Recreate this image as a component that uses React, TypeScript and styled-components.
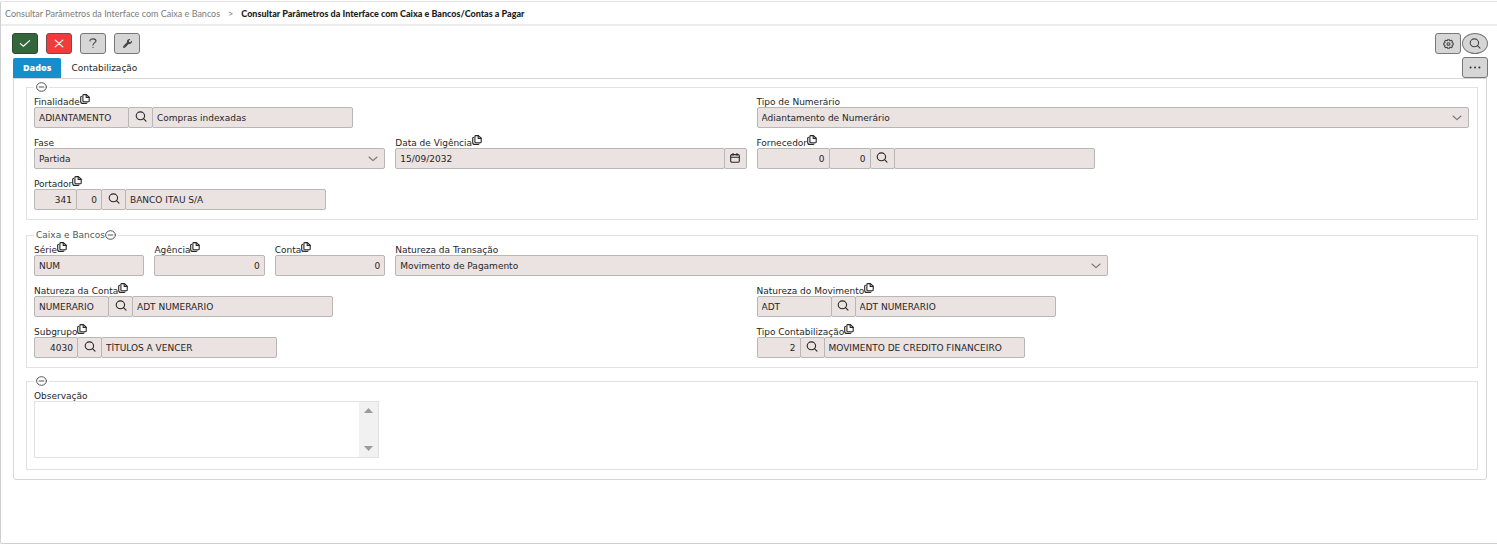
import React from "react";
import styled, { createGlobalStyle, css } from "styled-components";
import { FaWrench } from "react-icons/fa";

const GlobalStyle = createGlobalStyle`
  *, *::before, *::after { box-sizing: border-box; }
  html, body, #root { height: 100%; }
  body {
    margin: 0;
    background: #fff;
    color: #262626;
    font-family: "DejaVu Sans", "Noto Sans", sans-serif;
    font-size: 9px;
  }
  button, input, select, textarea { font: inherit; color: inherit; margin: 0; }
`;

const fieldBg = "#ebe2e2";
const fieldBorder = "#b9b6b6";
const line = "#e2e2e2";

const Page = styled.div`
  min-height: 100%;
  padding-top: 1px;
  display: flex;
  flex-direction: column;
`;

const Frame = styled.main`
  flex: 1;
  border: 1px solid #cfcfcf;
  border-right: 0;
  border-top-color: ${line};
  border-radius: 2px 0 0 2px;
`;

const Breadcrumb = styled.nav`
  height: 24px;
  padding: 2px 4px 0;
  display: flex;
  align-items: center;
  gap: 8px;
  border-bottom: 2px solid #ececec;
  font-family: Lato, "Noto Sans", sans-serif;
  line-height: 14px;
  color: #7c7c7c;
  a { color: inherit; text-decoration: none; }
  strong { color: #1c1c1c; font-weight: 900; }
`;

const Toolbar = styled.div`
  display: flex;
  justify-content: space-between;
  padding: 7px 9px 3px 11px;
`;

const Group = styled.div<{ $gap: number }>`
  display: flex;
  gap: ${(p) => p.$gap}px;
`;

const tones = {
  ok: css`background: #34663c; color: #fff; border-color: #2b4a30;`,
  cancel: css`background: #f23c3c; color: #fff; border-color: #7d4a4a;`,
  plain: css`background: #d6d6d6; color: #444; border-color: #777;`,
};

const ToolButton = styled.button<{ $tone?: keyof typeof tones; $round?: boolean }>`
  width: 26px;
  height: 21px;
  padding: 0;
  display: flex;
  align-items: center;
  justify-content: center;
  border: 1px solid;
  border-radius: ${(p) => (p.$round ? "50%" : "3px")};
  ${(p) => tones[p.$tone ?? "plain"]}
`;

const TabRow = styled.div`
  display: flex;
  justify-content: space-between;
  align-items: flex-end;
  padding: 0 9px 0 12px;
  height: 21px;
`;

const TabList = styled.div`
  display: flex;
`;

const Tab = styled.button<{ $active?: boolean }>`
  height: 20px;
  padding: 0 10px;
  border: 0;
  border-radius: 2px 2px 0 0;
  background: ${(p) => (p.$active ? "#158fcb" : "transparent")};
  line-height: 20px;
  ${(p) => p.$active && css`
    color: #fff;
    font-family: "Open Sans", sans-serif;
    font-weight: 800;
  `}
`;

const Panel = styled.section`
  margin: 0 10px 0 12px;
  padding: 2px 8px 9px 12px;
  border: 1px solid #d6d6d6;
  border-radius: 0 0 3px 3px;
`;

const FieldSet = styled.fieldset<{ $gap?: number }>`
  min-width: 0;
  margin: 0 0 ${(p) => p.$gap ?? 0}px;
  padding: 0 8px 9px 7px;
  border: 1px solid ${line};
`;

const NoteSet = styled(FieldSet)`
  padding-bottom: 11px;
`;

const Legend = styled.legend`
  height: 12px;
  padding: 0 2px;
  display: flex;
  align-items: center;
  line-height: 12px;
  color: #555;
`;

const Collapse = styled.button`
  padding: 0;
  border: 0;
  background: none;
  display: flex;
`;

const Grid = styled.div`
  display: grid;
  grid-template-columns: repeat(12, minmax(0, 1fr));
  gap: 6px 10px;
`;

const Cell = styled.div<{ $span: number }>`
  grid-column: span ${(p) => p.$span};
  min-width: 0;
`;

const LabelRow = styled.div`
  height: 14px;
  display: flex;
  align-items: flex-start;
  label { line-height: 18px; white-space: nowrap; }
  svg { margin-top: 1px; }
`;

const Controls = styled.div`
  display: flex;
  height: 21px;
`;

const box = css`
  height: 21px;
  border: 1px solid ${fieldBorder};
  border-radius: 2px;
  background: ${fieldBg};
`;

const TextInput = styled.input<{ $w?: number; $right?: boolean }>`
  ${box}
  ${(p) => (p.$w ? css`flex: 0 0 ${p.$w}px;` : css`flex: 1;`)}
  width: 0;
  min-width: 0;
  padding: 0 4px;
  outline: 0;
  text-align: ${(p) => (p.$right ? "right" : "left")};
  & + & { margin-left: -1px; }
`;

const InnerButton = styled.button`
  ${box}
  flex: 0 0 25px;
  padding: 0 0 2px;
  margin: 0 -1px;
  display: flex;
  align-items: center;
  justify-content: center;
`;

const DateButton = styled(InnerButton)`
  flex-basis: 23px;
  margin-right: 0;
`;

const SelectWrap = styled.div`
  flex: 1;
  display: grid;
  align-items: center;
  > * { grid-area: 1 / 1; }
  svg { justify-self: end; margin-right: 7px; pointer-events: none; }
`;

const Select = styled.select`
  ${box}
  width: 100%;
  padding: 0 20px 0 4px;
  appearance: none;
  outline: 0;
`;

const NoteBox = styled.div`
  max-width: 345px;
  height: 57px;
  display: flex;
  border: 1px solid ${line};
`;

const Note = styled.textarea`
  flex: 1;
  min-width: 0;
  padding: 2px 4px;
  border: 0;
  outline: 0;
  resize: none;
  overflow: hidden;
`;

const ScrollTrack = styled.div`
  width: 19px;
  padding: 6px 0;
  display: flex;
  flex-direction: column;
  align-items: center;
  justify-content: space-between;
  background: #f1f1f1;
`;

const stroke = { fill: "none", stroke: "currentColor", strokeLinecap: "round" as const, strokeLinejoin: "round" as const };

const SearchIcon = () => (
  <svg width="12" height="11" viewBox="0 0 12 11" {...stroke} strokeWidth="1.1">
    <ellipse cx="5.4" cy="4.8" rx="4.2" ry="3.9" />
    <path d="M8.5 7.6 11 10.2" />
  </svg>
);

const CopyIcon = () => (
  <svg width="10" height="10" viewBox="0 0 10 10" {...stroke} strokeWidth="1.1">
    <path d="M3.8.6H6.4L9.2 3.2V6.9Q9.2 7.7 8.4 7.7H3.8Q2.9 7.7 2.9 6.9V1.5Q2.9.6 3.8.6Z" />
    <path d="M6.2.8V3.4H9" />
    <path d="M1.6 2.2Q.7 2.3.7 3.2V7.4Q.7 9.4 2.8 9.4H6Q6.8 9.4 7 8.8" />
  </svg>
);

const MinusIcon = () => (
  <svg width="11" height="10" viewBox="0 0 11 10" {...stroke} stroke="#555" strokeWidth="1">
    <ellipse cx="5.5" cy="5" rx="4.9" ry="4.3" />
    <path d="M3.2 5H7.8" />
  </svg>
);

const Chevron = () => (
  <svg width="10" height="6" viewBox="0 0 10 6" {...stroke} stroke="#777" strokeWidth="1.1">
    <path d="M1 1 5 4.7 9 1" />
  </svg>
);

const CalendarIcon = () => (
  <svg width="10" height="10" viewBox="0 0 10 10" {...stroke} strokeWidth="1.1">
    <rect x=".7" y="1.6" width="8.6" height="7.6" rx="1.2" />
    <path d="M.7 4.2H9.3M3 .5V2.3M7 .5V2.3" />
  </svg>
);

const GearIcon = () => (
  <svg width="11" height="10" viewBox="0 0 11 10" {...stroke} strokeWidth="1.1">
    <path d="M4.6.7H6.4L6.8 1.7 8.4 1.3 9.4 2.3 9 3.6 10.2 4.2V5.8L9 6.4 9.4 7.7 8.4 8.7 6.8 8.3 6.4 9.3H4.6L4.2 8.3 2.6 8.7 1.6 7.7 2 6.4.8 5.8V4.2L2 3.6 1.6 2.3 2.6 1.3 4.2 1.7Z" />
    <ellipse cx="5.5" cy="5" rx="1.5" ry="1.3" />
  </svg>
);

const Arrow = ({ down }: { down?: boolean }) => (
  <svg width="9" height="5" viewBox="0 0 9 5" fill="#9a9a9a">
    <path d={down ? "M0 0H9L4.5 5Z" : "M0 5H9L4.5 0Z"} />
  </svg>
);

type FieldProps = { id: string; label: string; span: number; copy?: boolean; children: React.ReactNode };

const Field = ({ id, label, span, copy, children }: FieldProps) => (
  <Cell $span={span}>
    <LabelRow>
      <label htmlFor={id}>{label}</label>
      {copy && <CopyIcon />}
    </LabelRow>
    <Controls>{children}</Controls>
  </Cell>
);

type Code = { value: string; w: number; right?: boolean };

const LookupField = ({ id, label, span, codes, text, w }: {
  id: string; label: string; span: number; codes: Code[]; text: string; w: number;
}) => (
  <Field id={id} label={label} span={span} copy>
    {codes.map((c, i) => (
      <TextInput key={i} id={i === 0 ? id : undefined} aria-label={i ? `${label} ${i + 1}` : undefined}
        readOnly value={c.value} $w={c.w} $right={c.right} />
    ))}
    <InnerButton type="button" aria-label={`Pesquisar ${label}`}><SearchIcon /></InnerButton>
    <TextInput readOnly value={text} $w={w} aria-label={`Descrição ${label}`} />
  </Field>
);

const SelectField = ({ id, label, span, value }: { id: string; label: string; span: number; value: string }) => (
  <Field id={id} label={label} span={span}>
    <SelectWrap>
      <Select id={id}><option>{value}</option></Select>
      <Chevron />
    </SelectWrap>
  </Field>
);

const FieldLegend = ({ children }: { children?: React.ReactNode }) => (
  <Legend>
    {children}
    <Collapse type="button" aria-label="Recolher"><MinusIcon /></Collapse>
  </Legend>
);

export default function App() {
  return (
    <Page>
      <GlobalStyle />
      <Frame>
        <Breadcrumb>
          <a href="#parametros">Consultar Parâmetros da Interface com Caixa e Bancos</a>
          <span>&gt;</span>
          <strong>Consultar Parâmetros da Interface com Caixa e Bancos/Contas a Pagar</strong>
        </Breadcrumb>

        <Toolbar>
          <Group $gap={8}>
            <ToolButton type="button" $tone="ok" aria-label="Confirmar">
              <svg width="12" height="9" viewBox="0 0 12 9" {...stroke} strokeWidth="1.2"><path d="M1.4 4.6 4.4 7.2 10.6 1.6" /></svg>
            </ToolButton>
            <ToolButton type="button" $tone="cancel" aria-label="Cancelar">
              <svg width="10" height="9" viewBox="0 0 10 9" {...stroke} strokeWidth="1.2"><path d="M1.2 1.1 8.8 7.9M8.8 1.1 1.2 7.9" /></svg>
            </ToolButton>
            <ToolButton type="button" aria-label="Ajuda">
              <svg width="8" height="11" viewBox="0 0 8 11" {...stroke} strokeWidth="1.1">
                <path d="M1 2.9C1 1.5 2.3.9 4 .9S7 1.6 7 3 4 4.9 4 7M4 9.4V9.5" />
              </svg>
            </ToolButton>
            <ToolButton type="button" aria-label="Ferramentas">
              <FaWrench width="11" height="9" preserveAspectRatio="none" />
            </ToolButton>
          </Group>
          <Group $gap={1}>
            <ToolButton type="button" aria-label="Configurações"><GearIcon /></ToolButton>
            <ToolButton type="button" $round aria-label="Pesquisar"><SearchIcon /></ToolButton>
          </Group>
        </Toolbar>

        <TabRow>
          <TabList role="tablist">
            <Tab type="button" role="tab" aria-selected $active>Dados</Tab>
            <Tab type="button" role="tab" aria-selected={false}>Contabilização</Tab>
          </TabList>
          <ToolButton type="button" aria-label="Mais opções">
            <svg width="12" height="4" viewBox="0 0 12 4" fill="#333">
              <circle cx="1.6" cy="1.4" r="1" /><circle cx="6" cy="1.4" r="1" /><circle cx="10.4" cy="1.4" r="1" />
            </svg>
          </ToolButton>
        </TabRow>

        <Panel>
          <FieldSet $gap={9}>
            <FieldLegend />
            <Grid>
              <LookupField id="finalidade" label="Finalidade" span={6} codes={[{ value: "ADIANTAMENTO", w: 95 }]} text="Compras indexadas" w={201} />
              <SelectField id="tipo-numerario" label="Tipo de Numerário" span={6} value="Adiantamento de Numerário" />
              <SelectField id="fase" label="Fase" span={3} value="Partida" />
              <Field id="vigencia" label="Data de Vigência" span={3} copy>
                <TextInput id="vigencia" readOnly value="15/09/2032" />
                <DateButton type="button" aria-label="Abrir calendário"><CalendarIcon /></DateButton>
              </Field>
              <LookupField id="fornecedor" label="Fornecedor" span={6}
                codes={[{ value: "0", w: 73, right: true }, { value: "0", w: 42, right: true }]} text="" w={201} />
              <LookupField id="portador" label="Portador" span={6}
                codes={[{ value: "341", w: 43, right: true }, { value: "0", w: 26, right: true }]} text="BANCO ITAU S/A" w={201} />
            </Grid>
          </FieldSet>

          <FieldSet $gap={7}>
            <FieldLegend>Caixa e Bancos</FieldLegend>
            <Grid>
              <Field id="serie" label="Série" span={1} copy><TextInput id="serie" readOnly value="NUM" /></Field>
              <Field id="agencia" label="Agência" span={1} copy><TextInput id="agencia" readOnly value="0" $right /></Field>
              <Field id="conta" label="Conta" span={1} copy><TextInput id="conta" readOnly value="0" $right /></Field>
              <SelectField id="natureza-transacao" label="Natureza da Transação" span={6} value="Movimento de Pagamento" />
              <Cell $span={3} />
              <LookupField id="natureza-conta" label="Natureza da Conta" span={6} codes={[{ value: "NUMERARIO", w: 75 }]} text="ADT NUMERARIO" w={201} />
              <LookupField id="natureza-movimento" label="Natureza do Movimento" span={6} codes={[{ value: "ADT", w: 75 }]} text="ADT NUMERARIO" w={201} />
              <LookupField id="subgrupo" label="Subgrupo" span={6} codes={[{ value: "4030", w: 44, right: true }]} text="TÍTULOS A VENCER" w={176} />
              <LookupField id="tipo-contabilizacao" label="Tipo Contabilização" span={6} codes={[{ value: "2", w: 44, right: true }]} text="MOVIMENTO DE CREDITO FINANCEIRO" w={201} />
            </Grid>
          </FieldSet>

          <NoteSet>
            <FieldLegend />
            <LabelRow><label htmlFor="observacao">Observação</label></LabelRow>
            <NoteBox>
              <Note id="observacao" />
              <ScrollTrack><Arrow /><Arrow down /></ScrollTrack>
            </NoteBox>
          </NoteSet>
        </Panel>
      </Frame>
    </Page>
  );
}
